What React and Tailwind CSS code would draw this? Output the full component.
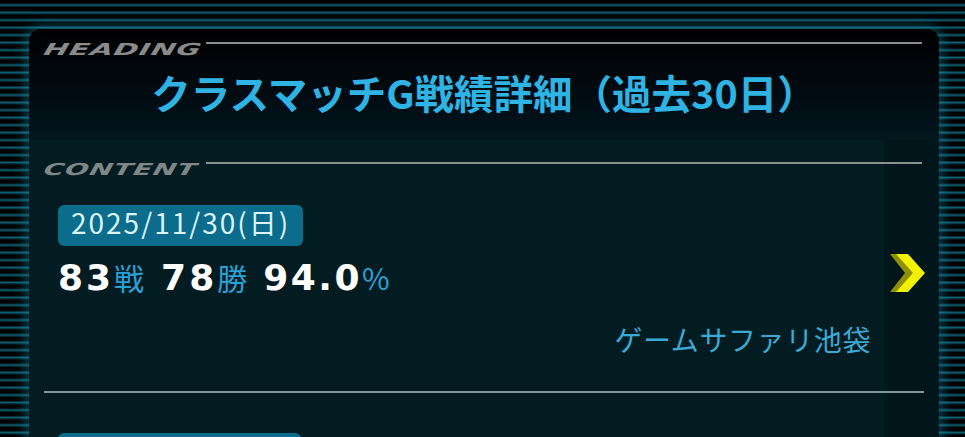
export default function App() {
  return (
    <div className="w-[965px] h-[437px] overflow-hidden bg-[repeating-linear-gradient(to_bottom,#000_0px,#000_3px,#0f5c6e_5px,#000_7.5px)] pt-[29px] pl-[29px]">
      <div className="w-[910px] h-[440px] rounded-[12px] overflow-hidden shadow-[0_0_14px_3px_rgba(25,160,190,0.45)] bg-[linear-gradient(to_bottom,#000_0px,#02111a_95px,#031c21_125px)] font-['Noto_Sans_CJK_JP','Noto_Sans',sans-serif]">
        {/* HEADING label */}
        <div className="flex items-center h-[14px] mt-[7px] pl-[15px] pr-[17px]">
          <div className="w-[162px] h-[14px] overflow-visible">
            <span className="inline-block origin-left scale-x-[1.78] -skew-x-[8deg] font-['DejaVu_Sans',sans-serif] font-bold italic text-[16.5px] leading-[14px] tracking-[0.5px] text-[#8b8b8b]">
              HEADING
            </span>
          </div>
          <div className="flex-1 h-[2px] bg-[#8a8a8a]" />
        </div>

        {/* Title */}
        <div className="mt-[20px] h-[44px] text-center text-[39.5px] leading-[44px] font-bold text-[#2eb3e3]">
          クラスマッチG戦績詳細（過去30日）
        </div>

        {/* Content section */}
        <div className="mt-[26px] pt-[16px] bg-[linear-gradient(to_right,#031c21_855px,#01161a_855px)] h-[320px]">
          <div className="flex items-center h-[14px] pl-[15px] pr-[17px]">
            <div className="w-[162px] h-[14px] overflow-visible">
              <span className="inline-block origin-left scale-x-[1.68] -skew-x-[8deg] font-['DejaVu_Sans',sans-serif] font-bold italic text-[16.5px] leading-[14px] tracking-[0.5px] text-[#7f8787]">
                CONTENT
              </span>
            </div>
            <div className="flex-1 h-[2px] bg-[#8a9090]" />
          </div>

          {/* Item */}
          <div className="flex">
            <div className="w-[855px] pl-[29px] pr-[13px] pt-[35px]">
              <div className="inline-flex h-[41px] items-start px-[13px] rounded-[6px] bg-[#0b6c8c] text-[28px] leading-[35px] tracking-[2px] text-[#dcf3f9]">
                2025/11/30(日)
              </div>
              <div className="mt-[11px] h-[40px] font-['DejaVu_Sans',sans-serif] text-[36px] leading-[40px] whitespace-nowrap">
                <span className="font-bold text-white tracking-[3px]">83</span>
                <span className="font-['Noto_Sans_CJK_JP',sans-serif] text-[30px] text-[#2ba0d6]">戦</span>
                <span className="ml-[17px] font-bold text-white tracking-[3px]">78</span>
                <span className="font-['Noto_Sans_CJK_JP',sans-serif] text-[30px] text-[#2ba0d6]">勝</span>
                <span className="ml-[16px] font-bold text-white tracking-[2.5px]">94.0</span>
                <span className="font-['Noto_Sans_CJK_JP',sans-serif] text-[30px] text-[#2ba0d6]">%</span>
              </div>
              <div className="mt-[26px] h-[32px] text-right text-[28px] leading-[32px] tracking-[0.6px] text-[#3aa9d3]">
                ゲームサファリ池袋
              </div>
            </div>
            <div className="w-[55px] pt-[82px] pl-[6px]">
              <svg width="36" height="42" viewBox="0 0 36 42">
                <polygon points="0,2 14,2 31,21 14,40 0,40 15,21" fill="#8f8f0a" />
                <polygon points="6,2 18,2 35,21 18,40 6,40 23,21" fill="#f2f200" />
              </svg>
            </div>
          </div>

          <div className="mt-[36px] ml-[15px] w-[880px] h-[2px] bg-[#7e9696]" />

          <div className="pl-[29px] mt-[40px]">
            <div className="inline-flex h-[41px] w-[243px] rounded-[6px] bg-[#0b6c8c]" />
          </div>
        </div>
      </div>
    </div>
  );
}
